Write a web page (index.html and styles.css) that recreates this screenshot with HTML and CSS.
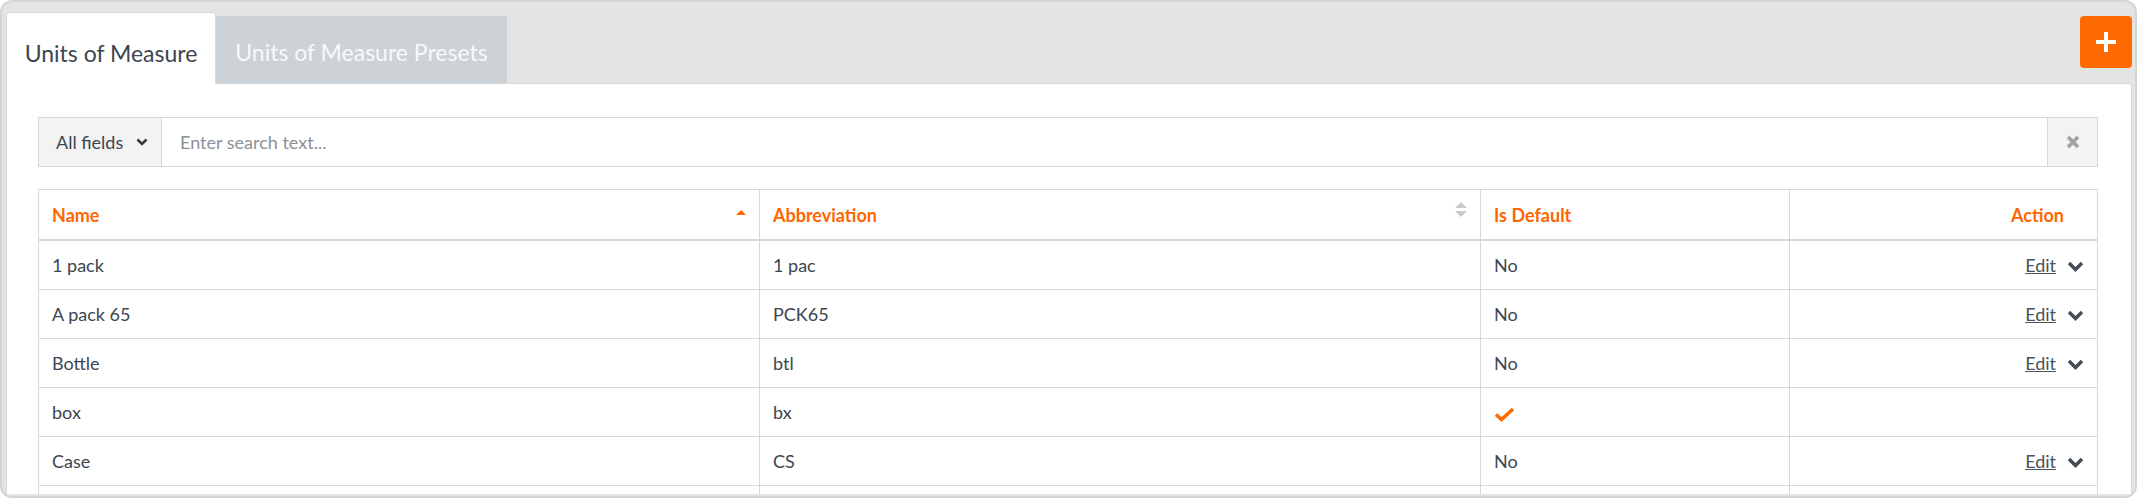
FILE: index.html
```html
<!DOCTYPE html>
<html lang="en">
<head>
    <meta charset="UTF-8">
    <meta name="viewport" content="width=device-width, initial-scale=1.0">
    <title>Units of Measure</title>
    <link rel="stylesheet" href="styles.css">
</head>
<body>
    <div class="uom-frame">
        <div class="tab-bar">
            <div class="tab active">Units of Measure</div>
            <div class="tab">Units of Measure Presets</div>
            <button class="add-button" title="Add">
                <svg width="22" height="22" viewBox="0 0 22 22"><path d="M11 1v20M1 11h20" stroke="#fff" stroke-width="4"/></svg>
            </button>
        </div>

        <div class="panel">
            <div class="search-row">
                <div class="field-select">All fields
                    <svg width="12" height="8" viewBox="0 0 12 8"><path d="M1.5 1.5l4.5 4.5 4.5-4.5" fill="none" stroke="#333b44" stroke-width="2.6"/></svg>
                </div>
                <div class="search-input">Enter search text...</div>
                <div class="clear-button">
                    <svg width="14" height="14" viewBox="0 0 14 14"><path d="M2 2l10 10M12 2L2 12" stroke="#a3a3a3" stroke-width="3.8"/></svg>
                </div>
            </div>

            <table class="uom-table">
                <colgroup>
                    <col style="width: 721px">
                    <col style="width: 721px">
                    <col style="width: 309px">
                    <col style="width: 308px">
                </colgroup>
                <thead>
                    <tr>
                        <th><div class="th-inner">Name <span class="sort-up"></span></div></th>
                        <th><div class="th-inner">Abbreviation <span class="sort-both"><span class="sort-up grey"></span><span class="sort-down grey"></span></span></div></th>
                        <th>Is Default</th>
                        <th class="action-head">Action</th>
                    </tr>
                </thead>
                <tbody>
                    <tr>
                        <td>1 pack</td><td>1 pac</td><td>No</td>
                        <td class="action-cell"><a href="#">Edit</a><svg class="chev" width="17" height="11" viewBox="0 0 17 11"><path d="M2 2l6.5 6.5L15 2" fill="none" stroke="#444c54" stroke-width="3.4"/></svg></td>
                    </tr>
                    <tr>
                        <td>A pack 65</td><td>PCK65</td><td>No</td>
                        <td class="action-cell"><a href="#">Edit</a><svg class="chev" width="17" height="11" viewBox="0 0 17 11"><path d="M2 2l6.5 6.5L15 2" fill="none" stroke="#444c54" stroke-width="3.4"/></svg></td>
                    </tr>
                    <tr>
                        <td>Bottle</td><td>btl</td><td>No</td>
                        <td class="action-cell"><a href="#">Edit</a><svg class="chev" width="17" height="11" viewBox="0 0 17 11"><path d="M2 2l6.5 6.5L15 2" fill="none" stroke="#444c54" stroke-width="3.4"/></svg></td>
                    </tr>
                    <tr>
                        <td>box</td><td>bx</td>
                        <td><svg class="check" width="21" height="16" viewBox="0 0 21 16"><path d="M2 8.5l5.5 5L19 3" fill="none" stroke="#ff6a00" stroke-width="3.6"/></svg></td>
                        <td class="action-cell"></td>
                    </tr>
                    <tr>
                        <td>Case</td><td>CS</td><td>No</td>
                        <td class="action-cell"><a href="#">Edit</a><svg class="chev" width="17" height="11" viewBox="0 0 17 11"><path d="M2 2l6.5 6.5L15 2" fill="none" stroke="#444c54" stroke-width="3.4"/></svg></td>
                    </tr>
                    <tr>
                        <td></td><td></td><td></td><td></td>
                    </tr>
                </tbody>
            </table>
        </div>
    </div>
</body>
</html>
```

FILE: styles.css
```css
body {
    margin: 0;
    font-family: Lato, "Open Sans", sans-serif;
    color: #3c4650;
    background-color: #ffffff;
}

.uom-frame {
    height: 498px;
    box-sizing: border-box;
    border: 2px solid #d4d6d6;
    border-radius: 12px;
    background-color: #e3e5e4;
    padding: 4px 3px 2px 4px;
    display: flex;
    flex-direction: column;
    overflow: hidden;
}

.tab-bar {
    display: flex;
    align-items: flex-end;
    height: 77px;
    flex-shrink: 0;
}

.tab {
    box-sizing: border-box;
    display: flex;
    align-items: center;
    justify-content: center;
    font-size: 23px;
    height: 67px;
    padding-top: 4px;
    width: 291px;
    background-color: #ccd2d5;
    color: #f7f9fa;
}

.tab.active {
    width: 210px;
    height: 72px;
    padding-top: 8px;
    background-color: #ffffff;
    color: #3c4650;
    border: 1px solid #d5d8da;
    border-bottom: none;
    border-radius: 4px 4px 0 0;
    position: relative;
    z-index: 1;
    margin-bottom: -1px;
}

.add-button {
    margin-left: auto;
    align-self: flex-start;
    margin-top: 10px;
    width: 52px;
    height: 52px;
    border: none;
    border-radius: 4px;
    background-color: #ff6a00;
    display: flex;
    align-items: center;
    justify-content: center;
    padding: 0;
    cursor: pointer;
}

.panel {
    flex: 1;
    background-color: #ffffff;
    border: 1px solid #d5d8da;
    border-bottom: none;
    border-radius: 0 4px 0 0;
    padding: 33px 33px 0 31px;
    overflow: hidden;
}

.search-row {
    display: flex;
    height: 50px;
    font-size: 18px;
}

.field-select {
    box-sizing: border-box;
    width: 124px;
    display: flex;
    align-items: center;
    gap: 13px;
    padding-left: 17px;
    background-color: #f3f3f3;
    border: 1px solid #d5d8da;
    color: #3c4650;
}

.search-input {
    flex: 1;
    display: flex;
    align-items: center;
    padding-left: 18px;
    border: 1px solid #d5d8da;
    border-left: none;
    color: #8c9196;
}

.clear-button {
    box-sizing: border-box;
    width: 50px;
    display: flex;
    align-items: center;
    justify-content: center;
    background-color: #f3f3f3;
    border: 1px solid #d5d8da;
    border-left: none;
}

.uom-table {
    margin-top: 22px;
    width: 2059px;
    table-layout: fixed;
    border-collapse: collapse;
    font-size: 18px;
}

.uom-table th,
.uom-table td {
    border: 1px solid #d5d8da;
    padding: 0 13px;
    text-align: left;
}

.uom-table th {
    height: 49px;
    color: #ff6600;
    font-weight: bold;
    font-size: 18px;
    border-bottom: 2px solid #d5d8da;
}

.uom-table td {
    height: 48px;
}

.th-inner {
    display: flex;
    align-items: center;
    justify-content: space-between;
}

.sort-up {
    width: 0;
    height: 0;
    border-left: 5px solid transparent;
    border-right: 5px solid transparent;
    border-bottom: 5px solid #ff6600;
    margin-top: -4px;
}

.sort-down {
    width: 0;
    height: 0;
    border-left: 6px solid transparent;
    border-right: 6px solid transparent;
    border-top: 6px solid #c9cccf;
}

.sort-up.grey {
    border-left-width: 6px;
    border-right-width: 6px;
    border-bottom: 6px solid #c9cccf;
    margin-top: 0;
}

.sort-both {
    display: flex;
    flex-direction: column;
    gap: 3px;
    margin-top: -11px;
}

.uom-table th.action-head {
    text-align: right;
    padding-right: 33px;
}

.action-cell {
    text-align: right !important;
    white-space: nowrap;
}

.action-cell a {
    color: #4a535c;
    text-decoration: underline;
}

.chev {
    margin-left: 11px;
    vertical-align: middle;
    position: relative;
    top: -1px;
}

.check {
    display: block;
    margin-top: 3px;
}
```
